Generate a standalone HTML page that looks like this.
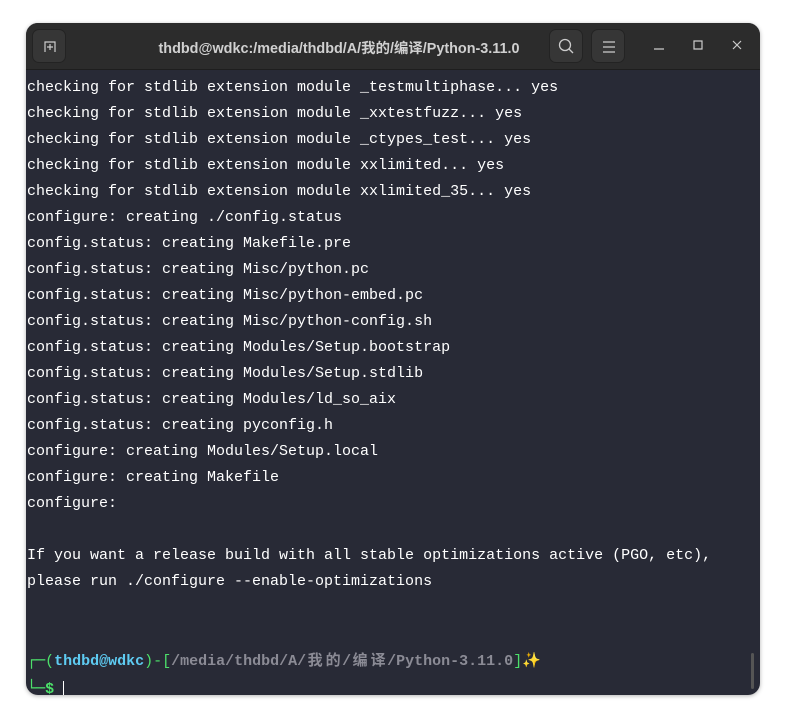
<!DOCTYPE html>
<html><head><meta charset="utf-8"><style>
body{margin:0;width:786px;height:725px;background:#fff;position:relative;overflow:hidden}
.win{position:absolute;left:26px;top:23px;width:734px;height:672px;border-radius:12px;background:#282a36;overflow:hidden;box-shadow:0 1px 4px rgba(0,0,0,.3)}
.tb{position:absolute;left:0;top:0;width:734px;height:46px;background:#2c2c2c;border-bottom:1px solid #1e1e1e}
.btn{position:absolute;top:6px;width:34px;height:34px;border-radius:7px;background:#363636;border:1px solid #232323;box-sizing:border-box}
.title{position:absolute;left:113px;width:400px;text-align:center;top:14px;color:#d0d0d0;font:bold 14.4px "Liberation Sans","Noto Sans CJK SC",sans-serif}
.term{position:absolute;left:1px;top:52px;font:15px/26px "Liberation Mono","Noto Sans CJK SC",monospace;color:#fff;white-space:pre}
.g{color:#4ce06a}.c{color:#5ecbf2;font-weight:bold}.p{color:#8b8b95;font-weight:bold}
.bx{font-family:"DejaVu Sans Mono",monospace}
.k{display:inline-block;width:18px;text-align:center}
</style></head><body>
<div class="win">
<div class="tb">
<div class="btn" style="left:6px"><svg width="34" height="34"><path d="M12 22V12h10v10M17 14v6M14 17h6" stroke="#ccc" fill="none" stroke-width="1.2"/></svg></div>
<div class="title">thdbd@wdkc:/media/thdbd/A/我的/编译/Python-3.11.0</div>
<div class="btn" style="left:523px"><svg width="34" height="34"><circle cx="15" cy="15" r="5.5" stroke="#ccc" fill="none" stroke-width="1.3"/><path d="M19 19l4 4" stroke="#ccc" stroke-width="1.3"/></svg></div>
<div class="btn" style="left:565px"><svg width="34" height="34"><path d="M11 12h12M11 17h12M11 22h12" stroke="#ccc" stroke-width="1.2"/></svg></div>
<svg style="position:absolute;left:620px;top:14px" width="110" height="20"><path d="M8 12h10M48 4h8v8h-8zM87 4l8 8M95 4l-8 8" stroke="#ccc" fill="none" stroke-width="1.2"/></svg>
</div>
<div class="term">checking for stdlib extension module _testmultiphase... yes
checking for stdlib extension module _xxtestfuzz... yes
checking for stdlib extension module _ctypes_test... yes
checking for stdlib extension module xxlimited... yes
checking for stdlib extension module xxlimited_35... yes
configure: creating ./config.status
config.status: creating Makefile.pre
config.status: creating Misc/python.pc
config.status: creating Misc/python-embed.pc
config.status: creating Misc/python-config.sh
config.status: creating Modules/Setup.bootstrap
config.status: creating Modules/Setup.stdlib
config.status: creating Modules/ld_so_aix
config.status: creating pyconfig.h
configure: creating Modules/Setup.local
configure: creating Makefile
configure:

If you want a release build with all stable optimizations active (PGO, etc),
please run ./configure --enable-optimizations


<span class="g"><span class="bx">┌─</span>(</span><span class="c">thdbd@wdkc</span><span class="g">)-[</span><span class="p">/media/thdbd/A/<span class="k">我</span><span class="k">的</span>/<span class="k">编</span><span class="k">译</span>/Python-3.11.0</span><span class="g">]</span>✨
<span class="g"><span class="bx">└─</span><b>$</b></span> <span style="border-left:1.5px solid #fff"> </span></div>
<div style="position:absolute;left:725px;top:630px;width:3px;height:36px;background:#555;border-radius:2px"></div>
</div>
</body></html>
